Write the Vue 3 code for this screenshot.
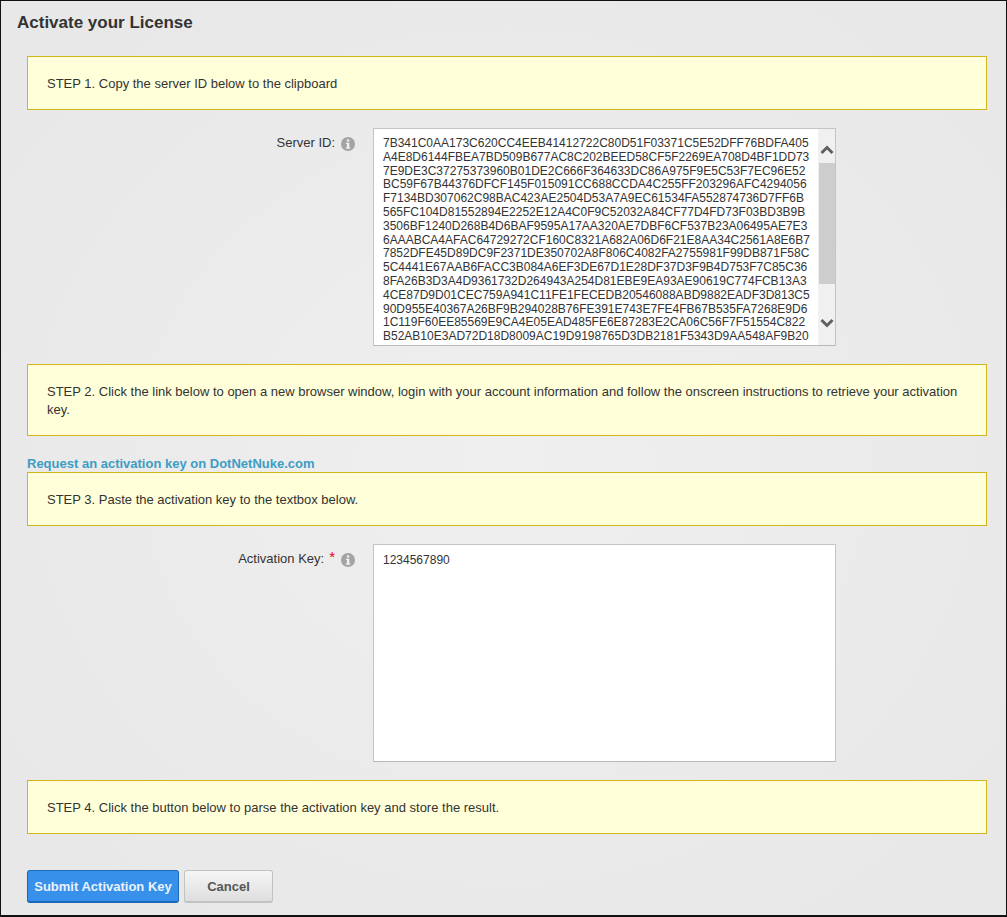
<script setup>
const serverLines = [
  '7B341C0AA173C620CC4EEB41412722C80D51F03371C5E52DFF76BDFA405',
  'A4E8D6144FBEA7BD509B677AC8C202BEED58CF5F2269EA708D4BF1DD73',
  '7E9DE3C37275373960B01DE2C666F364633DC86A975F9E5C53F7EC96E52',
  'BC59F67B44376DFCF145F015091CC688CCDA4C255FF203296AFC4294056',
  'F7134BD307062C98BAC423AE2504D53A7A9EC61534FA552874736D7FF6B',
  '565FC104D81552894E2252E12A4C0F9C52032A84CF77D4FD73F03BD3B9B',
  '3506BF1240D268B4D6BAF9595A17AA320AE7DBF6CF537B23A06495AE7E3',
  '6AAABCA4AFAC64729272CF160C8321A682A06D6F21E8AA34C2561A8E6B7',
  '7852DFE45D89DC9F2371DE350702A8F806C4082FA2755981F99DB871F58C',
  '5C4441E67AAB6FACC3B084A6EF3DE67D1E28DF37D3F9B4D753F7C85C36',
  '8FA26B3D3A4D9361732D264943A254D81EBE9EA93AE90619C774FCB13A3',
  '4CE87D9D01CEC759A941C11FE1FECEDB20546088ABD9882EADF3D813C5',
  '90D955E40367A26BF9B294028B76FE391E743E7FE4FB67B535FA7268E9D6',
  '1C119F60EE85569E9CA4E05EAD485FE6E87283E2CA06C56F7F51554C822',
  'B52AB10E3AD72D18D8009AC19D9198765D3DB2181F5343D9AA548AF9B20'
]
</script>

<template>
  <main class="page">
    <h1 class="title">Activate your License</h1>

    <section class="step step-one">STEP 1. Copy the server ID below to the clipboard</section>

    <div class="field server-field">
      <div class="label">
        <span>Server ID:</span>
        <svg class="info" viewBox="0 0 14 14" aria-hidden="true">
          <circle cx="7" cy="7" r="7" fill="#a3a3a3" />
          <rect x="5.9" y="2.4" width="2.4" height="2.2" fill="#f2f2f2" />
          <path d="M4.9 5.8h3.4v4.6h1v1.3H4.9v-1.3h1V7.1h-1z" fill="#f2f2f2" />
        </svg>
      </div>
      <div class="box server-box">
        <div class="lines">
          <div v-for="line in serverLines" :key="line">{{ line }}</div>
        </div>
        <div class="scrollbar">
          <svg class="arrow arrow-up" viewBox="0 0 14 10" aria-hidden="true">
            <path d="M1.5 8 7 2.5 12.5 8" fill="none" stroke="#606060" stroke-width="3" />
          </svg>
          <div class="track"><div class="thumb"></div></div>
          <svg class="arrow arrow-down" viewBox="0 0 14 10" aria-hidden="true">
            <path d="M1.5 2 7 7.5 12.5 2" fill="none" stroke="#606060" stroke-width="3" />
          </svg>
        </div>
      </div>
    </div>

    <section class="step step-two">STEP 2. Click the link below to open a new browser window, login with your account information and follow the onscreen instructions to retrieve your activation key.</section>

    <a class="request-link" href="#">Request an activation key on DotNetNuke.com</a>

    <section class="step">STEP 3. Paste the activation key to the textbox below.</section>

    <div class="field key-field">
      <div class="label">
        <span>Activation Key:</span>
        <span class="required">*</span>
        <svg class="info" viewBox="0 0 14 14" aria-hidden="true">
          <circle cx="7" cy="7" r="7" fill="#a3a3a3" />
          <rect x="5.9" y="2.4" width="2.4" height="2.2" fill="#f2f2f2" />
          <path d="M4.9 5.8h3.4v4.6h1v1.3H4.9v-1.3h1V7.1h-1z" fill="#f2f2f2" />
        </svg>
      </div>
      <div class="box key-box">1234567890</div>
    </div>

    <section class="step">STEP 4. Click the button below to parse the activation key and store the result.</section>

    <div class="actions">
      <button class="btn primary" type="button">Submit Activation Key</button>
      <button class="btn secondary" type="button">Cancel</button>
    </div>
  </main>
</template>

<style>
html, body { margin: 0; padding: 0; }
</style>

<style scoped>
.page {
  box-sizing: border-box;
  width: 1007px;
  height: 917px;
  overflow: hidden;
  padding: 0 19px 0 26px;
  border: 1px solid #111;
  border-bottom-width: 2px;
  background: radial-gradient(ellipse at 50% 50%, #efefef 0%, #e8e8e8 85%);
  font-family: "Liberation Sans", Arial, sans-serif;
  font-size: 13px;
  color: #333;
}
.title {
  margin: 12px 0 24px -10px;
  font-size: 17px;
  line-height: 19px;
  font-weight: 700;
  color: #333;
}
.step {
  box-sizing: border-box;
  min-height: 54px;
  padding: 19px 19px 18px;
  border: 1px solid #d2b41e;
  background: #ffffd9;
  line-height: 15px;
  color: #333;
}
.step-two {
  min-height: 72px;
  padding-top: 18px;
  padding-bottom: 16px;
  line-height: 18px;
}
.field {
  display: flex;
  align-items: flex-start;
}
.server-field { margin: 18px 0; }
.key-field { margin: 18px 0; }
.label {
  box-sizing: border-box;
  width: 346px;
  padding: 7px 18px 0 0;
  display: flex;
  justify-content: flex-end;
  align-items: flex-start;
  line-height: 15px;
  color: #333;
}
.required {
  margin: -2px 0 0 5px;
  color: #e4000f;
  font-size: 15px;
}
.info {
  width: 14px;
  height: 14px;
  margin: 2px 0 0 6px;
  flex: none;
}
.box {
  box-sizing: border-box;
  width: 463px;
  height: 218px;
  border: 1px solid #c4c4c4;
  border-bottom-color: #b8b8b8;
  background: #fff;
  color: #333;
  font-size: 12px;
}
.server-box {
  display: flex;
  overflow: hidden;
}
.lines {
  flex: 1;
  padding: 8px 0 0 9px;
  line-height: 13.8px;
  white-space: nowrap;
  overflow: hidden;
}
.scrollbar {
  width: 17px;
  flex: none;
  display: flex;
  flex-direction: column;
  background: #f0f0f0;
}
.arrow {
  width: 14px;
  height: 10px;
  flex: none;
  margin: 0 auto;
}
.arrow-up {
  margin-top: 16px;
  margin-bottom: 8px;
}
.track {
  flex: 1;
  min-height: 0;
  padding-left: 1px;
}
.thumb {
  height: 121px;
  background: #cdcdcd;
}
.arrow-down {
  margin-top: 7px;
  margin-bottom: 17px;
}
.key-box {
  padding: 8px 9px;
  line-height: 14px;
}
.request-link {
  display: block;
  margin: 20px 0 1px;
  height: 15px;
  line-height: 15px;
  font-weight: 700;
  color: #3d9dc4;
  text-decoration: none;
}
.actions {
  display: flex;
  gap: 5px;
  margin-top: 36px;
}
.btn {
  box-sizing: border-box;
  height: 33px;
  padding: 0;
  border-radius: 3px;
  font-family: inherit;
  font-size: 13px;
  font-weight: 700;
}
.primary {
  width: 152px;
  border: 1px solid #1a69b8;
  border-bottom-width: 2px;
  background: #3790ea;
  color: #e9f2fc;
}
.secondary {
  width: 89px;
  border: 1px solid #c2c2c2;
  border-bottom-width: 2px;
  background: linear-gradient(#f5f5f5, #dedede);
  color: #555;
}
</style>
